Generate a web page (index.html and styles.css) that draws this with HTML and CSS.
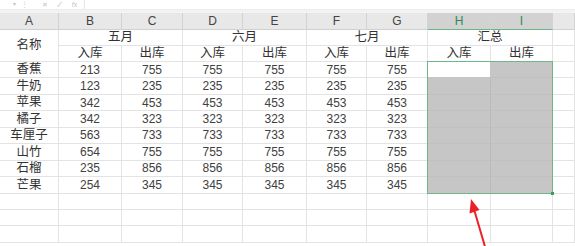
FILE: index.html
```html
<!DOCTYPE html>
<html lang="zh">
<head>
<meta charset="utf-8">
<link rel="stylesheet" href="styles.css">
</head>
<body>
<div class="toolbar">
  <span class="tb tb-drop">▾</span>
  <span class="tb tb-dots">⋮</span>
  <span class="tb tb-x">✕</span>
  <span class="tb tb-ok">✓</span>
  <span class="tb tb-fx"><i>f</i>x</span>
  <span class="tb-formula"></span>
</div>
<div class="strip"></div>
<div class="sheet">
  <div class="hd">A</div><div class="hd">B</div><div class="hd">C</div><div class="hd">D</div><div class="hd">E</div><div class="hd">F</div><div class="hd">G</div><div class="hd hd-sel">H</div><div class="hd hd-sel">I</div><div class="hd hd-last"></div>

  <div class="c cn name-merge">名称</div>
  <div class="c cn span2">五月</div>
  <div class="c cn span2">六月</div>
  <div class="c cn span2">七月</div>
  <div class="c cn span2">汇总</div>
  <div class="c"></div>

  <div class="c cn">入库</div><div class="c cn">出库</div><div class="c cn">入库</div><div class="c cn">出库</div><div class="c cn">入库</div><div class="c cn">出库</div><div class="c cn">入库</div><div class="c cn">出库</div><div class="c"></div>

  <div class="c cn">香蕉</div><div class="c">213</div><div class="c">755</div><div class="c">755</div><div class="c">755</div><div class="c">755</div><div class="c">755</div><div class="c active"></div><div class="c sel"></div><div class="c"></div>
  <div class="c cn">牛奶</div><div class="c">123</div><div class="c">235</div><div class="c">235</div><div class="c">235</div><div class="c">235</div><div class="c">235</div><div class="c sel"></div><div class="c sel"></div><div class="c"></div>
  <div class="c cn">苹果</div><div class="c">342</div><div class="c">453</div><div class="c">453</div><div class="c">453</div><div class="c">453</div><div class="c">453</div><div class="c sel"></div><div class="c sel"></div><div class="c"></div>
  <div class="c cn">橘子</div><div class="c">342</div><div class="c">323</div><div class="c">323</div><div class="c">323</div><div class="c">323</div><div class="c">323</div><div class="c sel"></div><div class="c sel"></div><div class="c"></div>
  <div class="c cn">车厘子</div><div class="c">563</div><div class="c">733</div><div class="c">733</div><div class="c">733</div><div class="c">733</div><div class="c">733</div><div class="c sel"></div><div class="c sel"></div><div class="c"></div>
  <div class="c cn">山竹</div><div class="c">654</div><div class="c">755</div><div class="c">755</div><div class="c">755</div><div class="c">755</div><div class="c">755</div><div class="c sel"></div><div class="c sel"></div><div class="c"></div>
  <div class="c cn">石榴</div><div class="c">235</div><div class="c">856</div><div class="c">856</div><div class="c">856</div><div class="c">856</div><div class="c">856</div><div class="c sel"></div><div class="c sel"></div><div class="c"></div>
  <div class="c cn">芒果</div><div class="c">254</div><div class="c">345</div><div class="c">345</div><div class="c">345</div><div class="c">345</div><div class="c">345</div><div class="c sel"></div><div class="c sel"></div><div class="c"></div>

  <div class="c"></div><div class="c"></div><div class="c"></div><div class="c"></div><div class="c"></div><div class="c"></div><div class="c"></div><div class="c"></div><div class="c"></div><div class="c"></div>
  <div class="c"></div><div class="c"></div><div class="c"></div><div class="c"></div><div class="c"></div><div class="c"></div><div class="c"></div><div class="c"></div><div class="c"></div><div class="c"></div>
  <div class="c"></div><div class="c"></div><div class="c"></div><div class="c"></div><div class="c"></div><div class="c"></div><div class="c"></div><div class="c"></div><div class="c"></div><div class="c"></div>

  <div class="range"><span class="handle"></span></div>
</div>
<svg class="arrow" width="575" height="246" viewBox="0 0 575 246">
  <line x1="486" y1="250" x2="474.5" y2="211" stroke="#ec2027" stroke-width="2"/>
  <polygon points="471,199 479.5,210 469.5,213.5" fill="#ec2027"/>
</svg>
</body>
</html>
```
FILE: styles.css
```css
html, body {
  margin: 0;
  padding: 0;
  background: #ffffff;
}
body {
  width: 575px;
  height: 246px;
  overflow: hidden;
  position: relative;
  font-family: "Liberation Sans", "Noto Sans CJK SC", sans-serif;
  font-size: 12px;
  color: #414141;
}
.toolbar {
  height: 9px;
  display: flex;
  align-items: center;
  background: #fff;
  color: #c4c4c4;
  font-size: 7px;
  line-height: 9px;
}
.tb {
  display: block;
  width: 15px;
  text-align: center;
}
.tb-drop { margin-left: 8px; width: 12px; font-size: 6px; }
.tb-dots { width: 8px; }
.tb-x { margin-left: 9px; }
.tb-fx { font-size: 7px; }
.tb-formula {
  align-self: stretch;
  margin-left: 2px;
  border-left: 1px solid #e6e6e6;
  flex: 1;
}
.strip {
  height: 4px;
  background: #f3f3f3;
  border-top: 1px solid #ececec;
  box-sizing: border-box;
}
.sheet {
  position: relative;
  display: grid;
  grid-template-columns: 59px 63px 61px 60px 64px 60px 61px 63px 62px 22px;
  grid-template-rows: 17px 16px 16px;
  grid-auto-rows: 16.45px;
}
.hd {
  background: #e8e8e8;
  border-right: 1px solid #d3d3d3;
  border-bottom: 1px solid #d0d0d0;
  box-sizing: border-box;
  display: flex;
  align-items: center;
  justify-content: center;
  color: #444;
  font-size: 12px;
}
.hd-sel {
  background: #d2d2d2;
  color: #2f8a55;
  border-bottom: 1px solid #6bb58a;
}
.c {
  border-right: 1px solid #e3e3e3;
  border-bottom: 1px solid #e3e3e3;
  box-sizing: border-box;
  display: flex;
  align-items: center;
  justify-content: center;
  white-space: nowrap;
  overflow: hidden;
  line-height: 1;
}
.cn {
  font-size: 12.5px;
  color: #333;
}
.name-merge {
  grid-row: span 2;
}
.span2 {
  grid-column: span 2;
}
.sel {
  background: #c6c6c6;
  border-right-color: #bababa;
  border-bottom-color: #c0c0c0;
}
.active {
  background: #fff;
  border-right-color: #c6c6c6;
  border-bottom-color: #c6c6c6;
}
.range {
  position: absolute;
  grid-column: 8 / 10;
  grid-row: 4 / 12;
  top: -1px;
  left: -1px;
  right: 0;
  bottom: 0;
  border: 1px solid #6db88b;
  z-index: 1;
  pointer-events: none;
}
.handle {
  position: absolute;
  right: -2px;
  bottom: -2px;
  width: 3px;
  height: 3px;
  background: #3e9a63;
}
.arrow {
  position: absolute;
  left: 0;
  top: 0;
  z-index: 2;
  pointer-events: none;
}
```
